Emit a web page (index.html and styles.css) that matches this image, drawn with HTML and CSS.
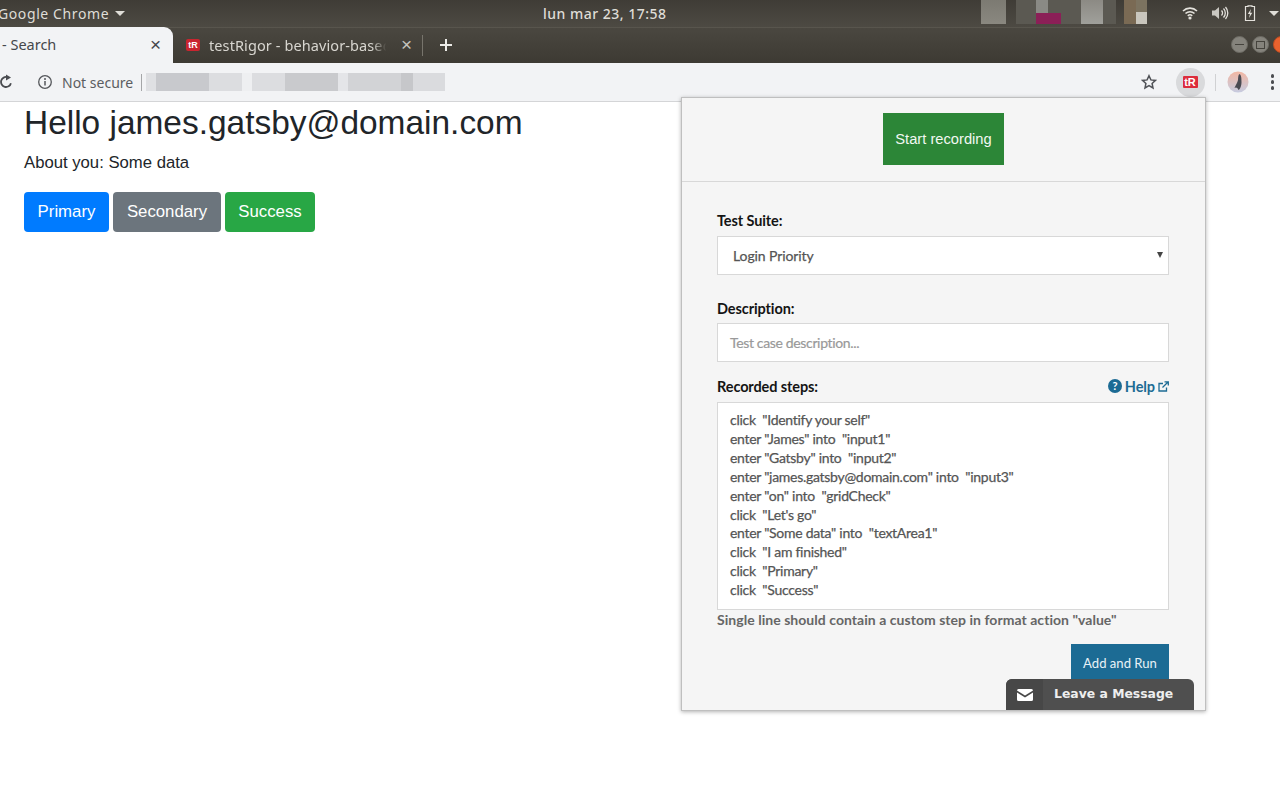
FILE: index.html
```html
<!DOCTYPE html>
<html lang="es">
<head>
<meta charset="utf-8">
<title>testRigor</title>
<link rel="stylesheet" href="styles.css">
</head>
<body>
<header class="topbar">
  <div class="app-menu">Google Chrome <span class="tri"></span></div>
  <div class="clock">lun mar 23, 17:58</div>
  <div class="tray">
    <div class="tray-blur"></div>
    <svg class="tray-icon" width="16" height="14" viewBox="0 0 16 14"><path d="M1 5a10 10 0 0 1 14 0M3.5 7.5a6.5 6.5 0 0 1 9 0M5.8 9.8a3.2 3.2 0 0 1 4.4 0" fill="none" stroke="#e4e2dc" stroke-width="1.6"/><circle cx="8" cy="12" r="1.6" fill="#e4e2dc"/></svg>
    <svg class="tray-icon" width="18" height="14" viewBox="0 0 18 14"><path d="M1 4.5h3L8 1v12L4 9.500H1z" fill="#c9c7c1"/><path d="M10.500 4.500a3.500 3.500 0 0 1 0 5M12.500 2.500a6.500 6.500 0 0 1 0 9M14.500 1a9 9 0 0 1 0 12" fill="none" stroke="#e4e2dc" stroke-width="1.300"/></svg>
    <svg class="tray-icon" width="14" height="16" viewBox="0 0 12 16"><path d="M4 1.500V.8h4v.7h2.500v14h-9v-14z" fill="none" stroke="#e4e2dc" stroke-width="1.200"/><path d="M7 4 3.800 9h2.100L5 13l3.300-5.200H6.200z" fill="#e4e2dc"/></svg>
    <span class="tri tray-tri"></span>
  </div>
</header>

<div class="tabstrip">
  <div class="tab active">
    <span class="tab-title">- Search</span>
    <span class="tab-x">×</span>
  </div>
  <div class="tab inactive">
    <span class="favicon">tR</span>
    <span class="tab-title fade">testRigor - behavior-based</span>
    <span class="tab-x dim">×</span>
  </div>
  <span class="tab-sep"></span>
  <svg class="newtab" width="14" height="14" viewBox="0 0 14 14"><path d="M7 1v12M1 7h12" stroke="#ecebe7" stroke-width="2"/></svg>
  <div class="winctl">
    <span class="wbtn"><span class="wmin"></span></span>
    <span class="wbtn"><span class="wmax"></span></span>
    <span class="wbtn wclose"></span>
  </div>
</div>

<div class="toolbar">
  <svg class="reload" width="16" height="16" viewBox="0 0 16 16"><path d="M9.500 3.200a5 5 0 1 0 3.400 6" fill="none" stroke="#4a4c50" stroke-width="1.800"/><path d="M8 .5 13 3.500 8 6.500z" fill="#4a4c50"/></svg>
  <svg class="info" width="16" height="16" viewBox="0 0 16 16"><circle cx="8" cy="8" r="6.300" fill="none" stroke="#55575b" stroke-width="1.300"/><path d="M8 7v4.500" stroke="#55575b" stroke-width="1.500"/><circle cx="8" cy="4.900" r="1" fill="#55575b"/></svg>
  <span class="notsecure">Not secure</span>
  <span class="omni-sep"></span>
  <span class="url-blur"></span>
  <svg class="star" width="16" height="16" viewBox="0 0 16 16"><path d="m8 1.700 1.900 4.200 4.600.5-3.400 3.100.9 4.500L8 11.700l-4 2.300.9-4.500-3.400-3.100 4.600-.5z" fill="none" stroke="#505257" stroke-width="1.500"/></svg>
  <span class="ext-active"><span class="ext-logo">tR</span></span>
  <span class="tool-sep"></span>
  <span class="avatar"><svg width="22" height="22" viewBox="0 0 22 22"><defs><linearGradient id="av" x1="0" y1="0" x2="0" y2="1"><stop offset="0" stop-color="#f2b7a3"/><stop offset="1" stop-color="#c6cbe0"/></linearGradient></defs><circle cx="11" cy="11" r="10.500" fill="url(#av)"/><path d="M12.500 3c2 1 2 5 2 8s-1 7-3 8c-1-3-3-3-4-2 1-3 3-5 3.500-8 .2-2 0-5 1.500-6z" fill="#4a4a52"/></svg></span>
  <span class="kebab"><i></i><i></i><i></i></span>
</div>

<main class="page">
  <h1 class="hello">Hello james.gatsby@domain.com</h1>
  <p class="about">About you: Some data</p>
  <div class="btn-row">
    <button class="btn primary">Primary</button>
    <button class="btn secondary">Secondary</button>
    <button class="btn success">Success</button>
  </div>
</main>

<aside class="popup">
  <div class="popup-head">
    <button class="record">Start recording</button>
  </div>
  <div class="popup-body">
    <label class="lbl first">Test Suite:</label>
    <div class="select">Login Priority<span class="caret"></span></div>
    <label class="lbl second">Description:</label>
    <div class="input">Test case description...</div>
    <div class="steps-head">
      <label class="lbl">Recorded steps:</label>
      <a class="help">
        <svg width="14" height="14" viewBox="0 0 14 14"><circle cx="7" cy="7" r="7" fill="#1c6b94"/><text class="qmark" x="7" y="11" text-anchor="middle">?</text></svg>
        Help
        <svg width="11" height="11" viewBox="0 0 11 11"><path d="M8.500 6.500V10H1V2.500h4" fill="none" stroke="#1c6b94" stroke-width="1.300"/><path d="M4.500 6.500 10 1M6.500 .8h3.800v3.800" fill="none" stroke="#1c6b94" stroke-width="1.300"/></svg>
      </a>
    </div>
    <div class="steps">click&nbsp; "Identify your self"
enter "James" into&nbsp; "input1"
enter "Gatsby" into&nbsp; "input2"
enter "james.gatsby@domain.com" into&nbsp; "input3"
enter "on" into&nbsp; "gridCheck"
click&nbsp; "Let's go"
enter "Some data" into&nbsp; "textArea1"
click&nbsp; "I am finished"
click&nbsp; "Primary"
click&nbsp; "Success"</div>
    <p class="hint">Single line should contain a custom step in format action "value"</p>
    <div class="actions"><button class="run">Add and Run</button></div>
  </div>
  <div class="chat">
    <span class="chat-icon"><svg width="16" height="12" viewBox="0 0 16 12"><path d="M0 1.500A1.500 1.500 0 0 1 1.500 0h13A1.500 1.500 0 0 1 16 1.500L8 6.500z" fill="#fff"/><path d="M0 3.500 8 8.500l8-5v7A1.500 1.500 0 0 1 14.500 12h-13A1.500 1.500 0 0 1 0 10.500z" fill="#fff"/></svg></span>
    <span class="chat-text">Leave a Message</span>
  </div>
</aside>
</body>
</html>
```
FILE: styles.css
```css
* { box-sizing: border-box; }
html, body { margin: 0; height: 100%; overflow: hidden; background: #fff; }
body { position: relative; width: 1280px; height: 800px; font-family: "Liberation Sans", Arial, sans-serif; }

.topbar {
  height: 27px;
  background: linear-gradient(#3f3c36, #4d4a43);
  color: #dfddd7;
  font-family: "Noto Sans", "Open Sans", sans-serif;
  font-size: 14px;
  display: grid;
  grid-template-columns: 543px auto 1fr;
  align-items: center;
  padding-bottom: 1px;
}
.app-menu { margin-left: -2px; white-space: nowrap; letter-spacing: .6px; display: flex; align-items: center; gap: 6px; }
.tri { width: 0; height: 0; border-left: 5px solid transparent; border-right: 5px solid transparent; border-top: 5px solid #dfddd7; display: inline-block; }
.clock { text-align: center; font-weight: 500; letter-spacing: .5px; font-size: 14px; }
.tray { display: flex; align-items: center; justify-content: flex-end; height: 26px; margin-right: 1px; }
.tray-blur {
  width: 177px; height: 24px; margin-right: 24px; align-self: flex-start;
  background:
    linear-gradient(#8b1f57, #8b1f57) 55px 13px / 25px 11px no-repeat,
    linear-gradient(#7c7a72, #8a8880) 0 0 / 25px 24px no-repeat,
    linear-gradient(#8a8a85, #8a8a85) 55px 0 / 12px 13px no-repeat,
    linear-gradient(#8c8a84, #a0a09b) 100px 0 / 22px 24px no-repeat,
    linear-gradient(#7a6a54, #7a6a54) 143px 0 / 12px 24px no-repeat,
    linear-gradient(#7c7360 50%, #c9c6bd 50%) 155px 0 / 11px 24px no-repeat,
    linear-gradient(#5b5952, #5b5952) 35px 0 / 100px 24px no-repeat;
}
.tray-icon { flex: none; }
.tray-icon:nth-of-type(1) { margin-right: 13px; }
.tray-icon:nth-of-type(2) { margin-right: 14px; }
.tray-icon:nth-of-type(3) { margin-right: 12px; }
.tray-tri { flex: none; }

.tabstrip {
  height: 36px;
  background: linear-gradient(#4a4740, #3d3a33);
  border-top: 1px solid #58554d;
  display: flex;
  align-items: flex-end;
  font-family: "Noto Sans", "Open Sans", sans-serif;
  font-size: 14.500px;
}
.tab { height: 35px; display: flex; align-items: center; padding-bottom: 2px; }
.tab.active {
  width: 173px; background: #f2f3f5; border-top-right-radius: 9px; color: #45474b;
  padding: 0 12px 2px 2px; justify-content: space-between;
  margin-top: -1px; height: 36px;
}
.tab.inactive { width: 250px; color: #d8d6d0; padding: 0 11px 2px 13px; }
.tab-title { white-space: nowrap; overflow: hidden; }
.tab.inactive .tab-title { width: 181px; margin-left: 9px; flex: none; letter-spacing: .1px; }
.fade { -webkit-mask-image: linear-gradient(90deg, #000 90%, transparent 98%); mask-image: linear-gradient(90deg, #000 90%, transparent 98%); }
.tab-x { font-size: 19px; line-height: 1; margin-left: auto; color: #45474b; font-family: "Liberation Sans", sans-serif; }
.tab-x.dim { color: #c5c3bd; }
.favicon {
  width: 14px; height: 12px; background: #c9252f; color: #fff; border-radius: 2px;
  font: bold 9px/12px "Liberation Sans", sans-serif; text-align: center; flex: none;
}
.tab-sep { width: 1px; height: 21px; background: #77746c; margin: 0 0 7px -1px; }
.newtab { margin: 0 0 11px 16px; }
.winctl { margin-left: auto; margin-right: -10px; display: flex; gap: 4px; align-self: center; margin-top: -2px; }
.wbtn { width: 17px; height: 17px; border-radius: 50%; background: #85837c; border: 1px solid #6c6a63; display: flex; align-items: center; justify-content: center; }
.wmin { width: 9px; height: 1.500px; background: #45433d; }
.wmax { width: 9px; height: 8px; border: 1px solid #45433d; }
.wclose { background: #e9622e; border-color: #c24c20; }

.toolbar {
  height: 39px;
  background: #f2f3f5;
  border-bottom: 1px solid #d4d5d7;
  display: flex;
  align-items: center;
  font-family: "Noto Sans", "Open Sans", sans-serif;
  font-size: 14px;
  color: #5b5d61;
}
.reload { margin-left: -2px; flex: none; }
.info { margin-left: 23px; flex: none; }
.notsecure { margin-left: 9px; white-space: nowrap; }
.omni-sep { width: 1px; height: 17px; background: #a5a6a8; margin-left: 8px; }
.url-blur {
  width: 299px; height: 18px; margin-left: 4px;
  background:
    linear-gradient(90deg, #dfe0e3 0 10px, #c8c9cd 10px 63px, #dcdde0 63px 96px, #eeeff1 96px 106px, #dcdde0 106px 139px, #c9cacd 139px 192px, #e4e5e8 192px 202px, #d2d3d6 202px 255px, #c6c7ca 255px 267px, #dadbde 267px 299px);
}
.star { margin-left: auto; flex: none; }
.ext-active { width: 29px; height: 29px; border-radius: 50%; background: #d9dadc; margin-left: 19px; display: flex; align-items: center; justify-content: center; }
.ext-logo { width: 15px; height: 12px; background: #dc2c3c; color: #fff; border-radius: 1px; font: bold 11px/12px "Liberation Sans", sans-serif; text-align: center; }
.tool-sep { width: 1px; height: 17px; background: #d0d1d3; margin-left: 10px; }
.avatar { margin-left: 11px; width: 22px; height: 22px; }
.avatar svg { display: block; }
.kebab { margin-left: 22px; margin-right: 6px; display: flex; flex-direction: column; gap: 2.500px; }
.kebab i { width: 3.500px; height: 3.500px; border-radius: 50%; background: #4a4c50; display: block; }

.page { padding: 1px 24px 0; color: #212529; }
.hello { margin: 0; font-size: 33.450px; font-weight: 400; line-height: 40px; }
.about { margin: 8px 0 0; font-size: 16.700px; line-height: 24px; }
.btn-row { display: flex; gap: 4px; margin-top: 17px; }
.btn { height: 40px; border: 0; border-radius: 4px; color: #fff; font: 16.800px "Liberation Sans", sans-serif; padding: 0 0 0; }
.primary { background: #007bff; width: 85px; }
.secondary { background: #6c757d; width: 108px; }
.success { background: #28a745; width: 90px; }

.popup {
  position: absolute; left: 681px; top: 97px; width: 525px; height: 614px;
  background: #f5f5f5; border: 1px solid #bfbfbf; box-shadow: 0 1px 4px rgba(0,0,0,.3);
  overflow: hidden;
  font-family: Lato, "Liberation Sans", sans-serif;
}
.popup-head { height: 84px; border-bottom: 1px solid #d8d8d8; display: flex; justify-content: center; padding-top: 15px; }
.record { width: 121px; height: 52px; background: #2c8637; color: #f2f8f2; border: 0; font: 14.700px "Liberation Sans", sans-serif; padding: 0; line-height: 52px; }
.popup-body { padding: 0 36px 0 35px; }
.lbl { display: block; font-weight: 700; font-size: 14.500px; line-height: 18px; color: #141414; letter-spacing: -.1px; }
.lbl.first { margin-top: 30px; }
.lbl.second { margin-top: 25px; }
.select, .input { height: 39px; background: #fff; border: 1px solid #d8d8d8; display: flex; align-items: center; }
.select { margin-top: 6px; padding: 0 5px 0 15px; font-size: 14px; color: #555; justify-content: space-between; letter-spacing: -.1px; -webkit-text-stroke: .25px #555; }
.caret { width: 0; height: 0; border-left: 3px solid transparent; border-right: 3px solid transparent; border-top: 6px solid #444; margin-bottom: 2px; }
.input { margin-top: 5px; padding-left: 12px; font-size: 14px; color: #999; letter-spacing: -.35px; -webkit-text-stroke: .2px #999; }
.steps-head { display: flex; justify-content: space-between; align-items: center; margin-top: 16px; height: 18px; }
.help { color: #1c6b94; font-size: 14.500px; font-weight: 700; display: flex; align-items: center; gap: 3px; letter-spacing: -.1px; margin-top: -2px; }
.qmark { font: 700 11px Lato, sans-serif; fill: #fff; }
.steps {
  margin-top: 6px; height: 208px; background: #fff; border: 1px solid #d8d8d8;
  padding: 8px 12px; font-size: 14px; line-height: 18.900px; color: #555; white-space: pre-line; letter-spacing: -.28px; -webkit-text-stroke: .25px #555;
}
.hint { margin: 1px 0 0; font-size: 14px; line-height: 18px; font-weight: 700; color: #666; letter-spacing: .04px; }
.actions { display: flex; justify-content: flex-end; margin-top: 15px; }
.run { width: 98px; height: 38px; background: #1c6b94; color: #e8f2f7; border: 0; font: 13.100px Lato, sans-serif; padding: 0; }

.chat {
  position: absolute; left: 324px; top: 581px; width: 188px; height: 32px;
  background: #4f4f4f; border-radius: 6px 6px 0 0; display: flex; align-items: center; color: #eee;
  font: 700 12.400px "DejaVu Sans", sans-serif;
}
.chat-icon { width: 37px; height: 100%; background: #474747; border-radius: 6px 0 0 0; display: flex; align-items: center; justify-content: center; }
.chat-text { margin-left: 11px; white-space: nowrap; padding-bottom: 3px; }
```
